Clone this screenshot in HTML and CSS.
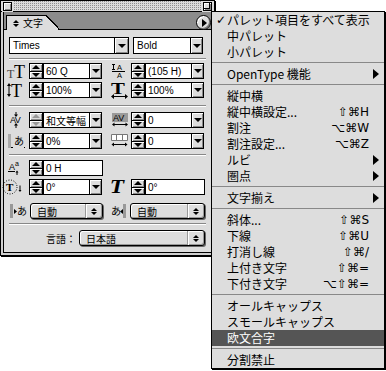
FILE: index.html
```html
<!DOCTYPE html>
<html lang="ja">
<head>
  <meta charset="UTF-8">
  <meta name="viewport" content="width=device-width, initial-scale=1.0">
  <title>文字パレット</title>
  <link rel="stylesheet" href="styles.css">
</head>
<body>
  <div class="stage">
    <!-- Character palette window -->
    <div class="palette">
      <div class="titlebar">
        <span class="closebox"></span>
        <span class="zoombox"></span>
      </div>
      <div class="frame">
        <div class="inner">
          <!-- Tab strip -->
          <div class="tabbar">
            <div class="tab"><span class="updown"></span>文字</div>
            <span class="menubtn"></span>
          </div>

          <div class="body">
            <!-- Font family / style -->
            <div class="fontrow">
              <div class="combo"><span class="field family">Times</span><span class="arrow wide"></span></div>
              <div class="combo"><span class="field styleval">Bold</span><span class="arrow"></span></div>
            </div>
            <div class="sep s1"></div>

            <!-- Size / leading -->
            <div class="row">
              <svg class="ico-l" viewBox="0 0 23 16">
                <text class="serif" x="1" y="15" font-size="12" fill="#444">T</text>
                <text class="serif" x="8" y="15" font-size="18">T</text>
              </svg>
              <span class="stepper"><i></i><i></i></span>
              <span class="field">60 Q</span>
              <span class="arrow"></span>
              <svg class="ico-r" viewBox="0 0 29 16">
                <path d="M11.5 1v6M10 1.5h3M10 6.5h3M10 8.5h13" stroke="#000" fill="none"/>
                <text class="sans" x="15" y="7" font-size="7.5">A</text>
                <text class="sans" x="15" y="15" font-size="7.5">A</text>
              </svg>
              <span class="stepper"><i></i><i></i></span>
              <span class="field">(105 H)</span>
              <span class="arrow"></span>
            </div>

            <!-- Vertical / horizontal scale -->
            <div class="row next">
              <svg class="ico-l" viewBox="0 0 23 16">
                <path d="M3 3v10" stroke="#000"/>
                <path d="M1 4l2-3 2 3zM1 12l2 3 2-3z"/>
                <text class="serif" x="5" y="15" font-size="18">T</text>
              </svg>
              <span class="stepper"><i></i><i></i></span>
              <span class="field">100%</span>
              <span class="arrow"></span>
              <svg class="ico-r" viewBox="0 0 29 16">
                <text class="serif bold" x="7" y="12" font-size="16" transform="scale(1.3 1)">T</text>
                <path d="M10 14.5h15" stroke="#000"/>
                <path d="M9 14.5l3-2.5v5zM26 14.5l-3-2.5v5z"/>
              </svg>
              <span class="stepper"><i></i><i></i></span>
              <span class="field">100%</span>
              <span class="arrow"></span>
            </div>
            <div class="sep s2"></div>

            <!-- Kerning / tracking -->
            <div class="row">
              <svg class="ico-l" viewBox="0 0 23 16">
                <text class="sans" x="4" y="11" font-size="9" letter-spacing="-0.5">AV</text>
                <path d="M10 0v3M10 13v3" stroke="#000"/>
                <path d="M8 2.5h4l-2 2.5zM8 13.5h4l-2-2.5z"/>
              </svg>
              <span class="stepper off"><i></i><i></i></span>
              <span class="field jp">和文等幅</span>
              <span class="arrow"></span>
              <svg class="ico-r" viewBox="0 0 29 16">
                <rect x="10" y="1" width="16" height="9" fill="#9a9a9a"/>
                <text class="sans" x="11" y="9" font-size="9">AV</text>
                <path d="M11 12.5h14" stroke="#000"/>
                <path d="M10 12.5l2.5-2v4zM26 12.5l-2.5-2v4z"/>
              </svg>
              <span class="stepper"><i></i><i></i></span>
              <span class="field">0</span>
              <span class="arrow"></span>
            </div>

            <!-- Tsume / aki -->
            <div class="row far">
              <svg class="ico-l" viewBox="0 0 23 16">
                <rect x="2" y="1" width="3" height="14" fill="#aaa"/>
                <text class="jp" x="8" y="12" font-size="10">あ</text>
                <path d="M5 14.5h2M18 14.5h1" stroke="#000"/>
              </svg>
              <span class="stepper"><i></i><i></i></span>
              <span class="field">0%</span>
              <span class="arrow"></span>
              <svg class="ico-r" viewBox="0 0 29 16">
                <path d="M9.5 1.5h16v6h-16zM14.5 1.5v6M20.5 1.5v6" fill="#fff" stroke="#777"/>
                <path d="M11 11.5h13" stroke="#000"/>
                <path d="M9.5 11.5l2.5-2v4zM25.5 11.5l-2.5-2v4z"/>
              </svg>
              <span class="stepper"><i></i><i></i></span>
              <span class="field">0</span>
              <span class="arrow"></span>
            </div>
            <div class="sep s3"></div>

            <!-- Baseline shift -->
            <div class="row">
              <svg class="ico-l" viewBox="0 0 23 16">
                <text class="sans" x="3" y="10" font-size="9">A</text>
                <text class="sans" x="9" y="6" font-size="7">a</text>
                <path d="M2 11.5h7M11 15v-3" stroke="#000"/>
                <path d="M9.5 12.5l1.5-2 1.5 2z"/>
              </svg>
              <span class="stepper"><i></i><i></i></span>
              <span class="field long">0 H</span>
            </div>

            <!-- Rotation / skew -->
            <div class="row next">
              <svg class="ico-l" viewBox="0 0 23 16">
                <circle cx="4" cy="8" r="7" fill="none" stroke="#000" stroke-dasharray="1 1.6"/>
                <text class="serif bold" x="0" y="12" font-size="11">T</text>
                <path d="M14 6.5v5" stroke="#000"/>
                <path d="M12.5 11l1.5 2 1.5-2z"/>
              </svg>
              <span class="stepper"><i></i><i></i></span>
              <span class="field">0°</span>
              <span class="arrow"></span>
              <svg class="ico-r" viewBox="0 0 29 16">
                <text class="serif bold italic" x="6" y="14" font-size="18" transform="scale(1.3 1)">T</text>
              </svg>
              <span class="stepper"><i></i><i></i></span>
              <span class="field long">0°</span>
            </div>

            <!-- Aki before / after -->
            <div class="row wide">
              <svg class="ico-l aki" viewBox="0 0 24 16">
                <rect x="4" y="1" width="3" height="14" fill="#999"/>
                <path d="M8 6l3 2.5-3 2.5z"/>
                <text class="jp" x="11" y="12" font-size="10">あ</text>
              </svg>
              <span class="popup aki-l"><span class="val">自動</span><span class="spin"><span class="updown"></span></span></span>
              <svg class="ico-r aki" viewBox="0 0 27 16">
                <text class="jp" x="8" y="12" font-size="10">あ</text>
                <path d="M20 6l-3 2.5 3 2.5z"/>
                <rect x="20" y="1" width="3" height="14" fill="#999"/>
              </svg>
              <span class="popup aki-r"><span class="val">自動</span><span class="spin"><span class="updown"></span></span></span>
            </div>
            <div class="sep s4"></div>

            <!-- Language -->
            <div class="row lang">
              <span class="label">言語：</span>
              <span class="popup langsel"><span class="val">日本語</span><span class="spin"><span class="updown"></span></span></span>
            </div>
          </div>
        </div>
      </div>
    </div>

    <!-- Palette menu, opened -->
    <div class="menu">
      <div class="item"><span class="mark">✓</span><span class="label">パレット項目をすべて表示</span></div>
      <div class="item"><span class="mark"></span><span class="label">中パレット</span></div>
      <div class="item"><span class="mark"></span><span class="label">小パレット</span></div>
      <div class="msep"></div>
      <div class="item sub"><span class="mark"></span><span class="label">OpenType 機能</span></div>
      <div class="msep"></div>
      <div class="item"><span class="mark"></span><span class="label">縦中横</span></div>
      <div class="item"><span class="mark"></span><span class="label">縦中横設定...</span><span class="keys">⇧⌘H</span></div>
      <div class="item"><span class="mark"></span><span class="label">割注</span><span class="keys">⌥⌘W</span></div>
      <div class="item"><span class="mark"></span><span class="label">割注設定...</span><span class="keys">⌥⌘Z</span></div>
      <div class="item sub"><span class="mark"></span><span class="label">ルビ</span></div>
      <div class="item sub"><span class="mark"></span><span class="label">圏点</span></div>
      <div class="msep"></div>
      <div class="item sub"><span class="mark"></span><span class="label">文字揃え</span></div>
      <div class="msep"></div>
      <div class="item"><span class="mark"></span><span class="label">斜体...</span><span class="keys">⇧⌘S</span></div>
      <div class="item"><span class="mark"></span><span class="label">下線</span><span class="keys">⇧⌘U</span></div>
      <div class="item"><span class="mark"></span><span class="label">打消し線</span><span class="keys">⇧⌘/</span></div>
      <div class="item"><span class="mark"></span><span class="label">上付き文字</span><span class="keys">⇧⌘=</span></div>
      <div class="item"><span class="mark"></span><span class="label">下付き文字</span><span class="keys">⌥⇧⌘=</span></div>
      <div class="msep"></div>
      <div class="item"><span class="mark"></span><span class="label">オールキャップス</span></div>
      <div class="item"><span class="mark"></span><span class="label">スモールキャップス</span></div>
      <div class="item hl"><span class="mark"></span><span class="label">欧文合字</span></div>
      <div class="msep"></div>
      <div class="item"><span class="mark"></span><span class="label">分割禁止</span></div>
    </div>
  </div>
</body>
</html>
```

FILE: styles.css
```css
/* General */
* {
  box-sizing: border-box;
}

body {
  margin: 0;
  background: #fff;
  color: #000;
  font-family: "Liberation Sans", Arial, sans-serif;
  font-size: 10px;
}

.stage {
  position: relative;
  width: 386px;
  height: 371px;
}

.jp {
  font-family: "Noto Sans CJK JP", sans-serif;
}

.serif {
  font-family: "Liberation Serif", serif;
}

.sans {
  font-family: "Liberation Sans", sans-serif;
}

.bold {
  font-weight: bold;
}

.italic {
  font-style: italic;
}

/* Palette window */
.palette {
  width: 215px;
  border: 1px solid #000;
  box-shadow: 1px 1px 0 #000;
  background: #cfcfcf;
}

.titlebar {
  display: flex;
  justify-content: space-between;
  align-items: flex-start;
  height: 11px;
  padding: 1px 2px 0;
  border-bottom: 1px solid #000;
  background-color: #dcdcdc;
  background-image: conic-gradient(from 90deg at 1px 1px, transparent 0 75%, #8f8f8f 0);
  background-size: 2px 2px;
}

.closebox,
.zoombox {
  position: relative;
  width: 9px;
  height: 9px;
  border: 1px solid #000;
  background: #ddd;
  box-shadow: 0 0 0 1px #dcdcdc, inset 1px 1px #fff, inset -1px -1px #888;
}

.zoombox::after {
  content: "";
  position: absolute;
  left: 0;
  top: 0;
  width: 5px;
  height: 5px;
  border-right: 1px solid #000;
  border-bottom: 1px solid #000;
}

.frame {
  padding: 0 2px 2px;
}

.inner {
  border: 1px solid #000;
  border-top: none;
}

/* Tab strip */
.tabbar {
  display: flex;
  align-items: flex-end;
  height: 18px;
  padding-left: 2px;
  background: #8c8c8c;
  border-bottom: 1px solid #000;
}

.tab {
  position: relative;
  display: flex;
  align-items: center;
  gap: 4px;
  width: 40px;
  height: 15px;
  margin-bottom: -1px;
  padding-left: 6px;
  border-top: 1px solid #000;
  border-left: 1px solid #000;
  background: #ddd;
  font-family: "Noto Sans CJK JP", sans-serif;
  font-size: 10px;
  line-height: 1;
}

.tab::after {
  content: "";
  position: absolute;
  top: -1px;
  left: 100%;
  width: 14px;
  height: 15px;
  background: linear-gradient(to top right, #ddd calc(50% - 0.8px), #000 calc(50% - 0.8px), #000 calc(50% + 0.6px), transparent calc(50% + 0.6px));
}

.menubtn {
  display: flex;
  align-items: center;
  justify-content: center;
  width: 15px;
  height: 15px;
  margin-left: auto;
  margin-bottom: -1px;
  border: 1px solid #000;
  border-radius: 50%;
  background: #ddd;
  box-shadow: inset 1px 1px #fff, inset -1px -1px #777;
}

.menubtn::before {
  content: "";
  margin-left: 2px;
  border-style: solid;
  border-width: 4px 0 4px 5px;
  border-color: transparent transparent transparent #000;
}

/* up / down arrows used by tab and popups */
.updown {
  display: flex;
  flex-direction: column;
  gap: 1px;
}

.updown::before,
.updown::after {
  content: "";
  border-style: solid;
  border-color: transparent;
}

.updown::before {
  border-width: 0 3.5px 3px;
  border-bottom-color: #000;
}

.updown::after {
  border-width: 3px 3.5px 0;
  border-top-color: #000;
}

/* Palette body */
.body {
  padding: 7px 0 6px;
  background: #ddd;
}

.fontrow {
  display: flex;
  height: 17px;
  padding-left: 5px;
}

.combo {
  display: flex;
}

.combo + .combo {
  margin-left: 4px;
}

.field {
  display: flex;
  align-items: center;
  flex: none;
  width: 47px;
  height: 100%;
  padding-left: 2px;
  border: 1px solid #000;
  background: #fff;
  white-space: nowrap;
  overflow: hidden;
}

.field.family {
  width: 106px;
  padding-left: 3px;
}

.field.styleval {
  width: 58px;
  padding-left: 3px;
}

.field.long {
  width: 60px;
}

.arrow {
  display: flex;
  align-items: center;
  justify-content: center;
  flex: none;
  width: 12px;
  height: 100%;
  border: 1px solid #000;
  border-left: none;
  background: #ddd;
  box-shadow: inset 1px 1px #fff, inset -1px -1px #8a8a8a;
}

.arrow.wide {
  width: 14px;
}

.arrow::before {
  content: "";
  border-style: solid;
  border-width: 4px 4px 0;
  border-color: #000 transparent transparent;
}

.sep {
  height: 2px;
  margin: 0 5px;
  border-top: 1px solid #888;
  border-bottom: 1px solid #fff;
}

.sep.s1 { margin-top: 4px; margin-bottom: 3px; }
.sep.s2 { margin-top: 7px; margin-bottom: 5px; }
.sep.s3 { margin-top: 5px; margin-bottom: 4px; }
.sep.s4 { margin-top: 4px; margin-bottom: 5px; }

.row {
  display: flex;
  align-items: center;
  height: 16px;
  padding-left: 2px;
}

.row.next { margin-top: 3px; }
.row.far { margin-top: 5px; }
.row.wide { margin-top: 8px; }

.ico-l,
.ico-r {
  flex: none;
  height: 16px;
  overflow: visible;
}

.ico-l { width: 23px; }
.ico-r { width: 29px; }
.ico-l.aki { width: 24px; }
.ico-r.aki { width: 27px; }

.stepper {
  display: flex;
  flex-direction: column;
  flex: none;
  width: 14px;
  height: 16px;
  border: 1px solid #000;
  background: #ddd;
}

.stepper i {
  display: flex;
  align-items: center;
  justify-content: center;
  flex: 1;
  box-shadow: inset 1px 1px #fff, inset -1px -1px #8a8a8a;
}

.stepper i + i {
  border-top: 1px solid #000;
}

.stepper i::before {
  content: "";
  border-style: solid;
  border-width: 0 4px 4px;
  border-color: transparent transparent #000;
}

.stepper i + i::before {
  border-width: 4px 4px 0;
  border-color: #000 transparent transparent;
}

.stepper.off i::before {
  border-bottom-color: #999;
}

.stepper.off i + i::before {
  border-top-color: #999;
}

/* Popup buttons */
.popup {
  display: flex;
  flex: none;
  height: 16px;
  border: 1px solid #000;
  border-radius: 3px;
  background: #ddd;
  box-shadow: inset 1px 1px #fff, inset -1px -1px #999, 1px 1px 0 #666;
  font-family: "Noto Sans CJK JP", sans-serif;
  font-size: 10px;
}

.popup .val {
  display: flex;
  align-items: center;
  flex: 1;
  padding-left: 6px;
}

.popup .spin {
  display: flex;
  align-items: center;
  justify-content: center;
  width: 17px;
  border-left: 1px solid #999;
  box-shadow: inset 1px 0 #fff;
}

.popup.aki-l { width: 73px; }
.popup.aki-r { width: 75px; }
.popup.langsel { width: 126px; }

.lang .label {
  width: 73px;
  padding-right: 3px;
  text-align: right;
  font-family: "Noto Sans CJK JP", sans-serif;
  font-size: 10px;
}

/* Palette menu */
.menu {
  position: absolute;
  left: 211px;
  top: 11px;
  width: 174px;
  border: 1px solid #000;
  box-shadow: 1px 1px 0 #000;
  background: #ddd;
  font-family: "Noto Sans CJK JP", sans-serif;
  font-size: 12px;
}

.menu .item {
  display: flex;
  align-items: center;
  height: 16px;
  padding-left: 4px;
  line-height: 16px;
  white-space: nowrap;
}

.menu .mark {
  width: 11px;
  font-family: "DejaVu Sans", sans-serif;
  font-size: 12px;
  font-weight: bold;
}

.menu .label {
  flex: 1;
}

.menu .keys {
  margin-right: 15px;
  font-family: "DejaVu Sans", sans-serif;
  font-size: 12px;
}

.menu .sub::after {
  content: "";
  margin-right: 5px;
  border-style: solid;
  border-width: 5px 0 5px 6px;
  border-color: transparent transparent transparent #000;
}

.menu .hl {
  background: #555;
  color: #fff;
}

.msep {
  height: 6px;
  background: linear-gradient(#888, #888) 0 2px / 100% 1px no-repeat;
}
```
